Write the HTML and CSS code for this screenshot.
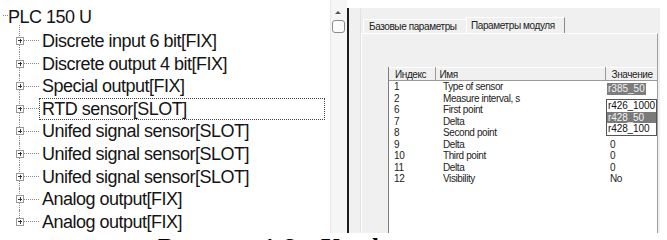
FILE: index.html
```html
<!DOCTYPE html>
<html lang="ru">
<head>
    <meta charset="UTF-8">
    <title>PLC 150 U - Параметры модуля</title>
    <link rel="stylesheet" href="styles.css">
</head>
<body>
    <div class="screen">
        <div class="tree-pane">
            <div class="tree-root"><span class="root-stub"></span><span>PLC 150 U</span></div>
            <ul class="tree">
                <li><span class="plus"></span><span class="branch"></span><span class="label">Discrete input 6 bit[FIX]</span></li>
                <li><span class="plus"></span><span class="branch"></span><span class="label">Discrete output 4 bit[FIX]</span></li>
                <li><span class="plus"></span><span class="branch"></span><span class="label">Special output[FIX]</span></li>
                <li><span class="plus"></span><span class="branch"></span><span class="label focus">RTD sensor[SLOT]</span></li>
                <li><span class="plus"></span><span class="branch"></span><span class="label">Unifed signal sensor[SLOT]</span></li>
                <li><span class="plus"></span><span class="branch"></span><span class="label">Unifed signal sensor[SLOT]</span></li>
                <li><span class="plus"></span><span class="branch"></span><span class="label">Unifed signal sensor[SLOT]</span></li>
                <li><span class="plus"></span><span class="branch"></span><span class="label">Analog output[FIX]</span></li>
                <li><span class="plus"></span><span class="branch"></span><span class="label">Analog output[FIX]</span></li>
            </ul>
        </div>
        <div class="scroll-strip">
            <span class="arrow-up"></span>
            <span class="check-box"></span>
        </div>
        <div class="props-pane">
            <div class="splitter"></div>
            <div class="tabs">
                <div class="tab-row">
                    <div class="tab">Базовые параметры</div>
                    <div class="tab active">Параметры модуля</div>
                </div>
                <div class="tab-panel">
                    <div class="grid">
                        <table>
                            <colgroup>
                                <col class="col-index">
                                <col class="col-name">
                                <col class="col-value">
                            </colgroup>
                            <thead>
                                <tr><th>Индекс</th><th>Имя</th><th>Значение</th></tr>
                            </thead>
                            <tbody>
                                <tr><td>1</td><td>Type of sensor</td><td></td></tr>
                                <tr><td>2</td><td>Measure interval, s</td><td></td></tr>
                                <tr><td>6</td><td>First point</td><td></td></tr>
                                <tr><td>7</td><td>Delta</td><td></td></tr>
                                <tr><td>8</td><td>Second point</td><td></td></tr>
                                <tr><td>9</td><td>Delta</td><td>0</td></tr>
                                <tr><td>10</td><td>Third point</td><td>0</td></tr>
                                <tr><td>11</td><td>Delta</td><td>0</td></tr>
                                <tr><td>12</td><td>Visibility</td><td>No</td></tr>
                            </tbody>
                        </table>
                        <div class="combo"><span class="combo-sel">r385_50</span></div>
                        <ul class="dropdown">
                            <li>r426_1000</li>
                            <li class="selected">r428_50</li>
                            <li>r428_100</li>
                        </ul>
                    </div>
                </div>
            </div>
        </div>
    </div>
    <div class="caption">Рисунок 1.6 – Конфигурация модуля</div>
</body>
</html>
```
FILE: styles.css
```css
* { padding: 0; margin: 0; box-sizing: border-box; }
body {
    width: 667px;
    height: 240px;
    overflow: hidden;
    background: #fff;
    font-family: "Liberation Sans", Arial, sans-serif;
}
.screen {
    display: flex;
    height: 233px;
}

/* device tree */
.tree-pane {
    flex: 0 0 330px;
    overflow: hidden;
    background: #fff;
    color: #141414;
    font-size: 18px;
    letter-spacing: -0.5px;
}
.tree-root {
    display: flex;
    align-items: flex-start;
    height: 29.7px;
    padding: 6px 0 0 3px;
    line-height: 22px;
}
.root-stub {
    width: 5px;
    margin-top: 9px;
    border-top: 1px dotted #8a8a8a;
}
.tree {
    list-style: none;
    margin-left: 19px;
}
.tree li {
    position: relative;
    display: flex;
    align-items: center;
    height: 22.6px;
}
.tree li::before {
    content: "";
    position: absolute;
    left: 0;
    top: 0;
    bottom: 0;
    border-left: 1px dotted #8a8a8a;
}
.tree li:first-child::before { top: -5px; }
.tree li:last-child::before { bottom: 50%; }
.plus {
    position: relative;
    width: 8px;
    height: 8px;
    margin-left: -3px;
    border: 1px solid #9a9a9a;
    background: #fff;
}
.plus::before, .plus::after {
    content: "";
    position: absolute;
    background: #333;
}
.plus::before { left: 1px; right: 1px; top: 2.5px; height: 1px; }
.plus::after { top: 1px; bottom: 1px; left: 2.5px; width: 1px; }
.branch {
    width: 15px;
    border-top: 1px dotted #8a8a8a;
}
.label {
    border: 1px dotted transparent;
    padding: 0 2px;
    line-height: 20px;
    white-space: nowrap;
}
.label.focus {
    width: 286px;
    border-color: #444;
}

/* thin scroll strip */
.scroll-strip {
    flex: 0 0 17px;
    display: flex;
    flex-direction: column;
    align-items: center;
    padding: 11px 2px 0 0;
    background: #f6f6f6;
    border-left: 1px solid #e8e8e8;
}
.arrow-up {
    width: 0;
    height: 0;
    border-left: 3px solid transparent;
    border-right: 3px solid transparent;
    border-bottom: 3px solid #555;
}
.check-box {
    width: 13px;
    height: 13px;
    margin-top: 6px;
    border: 1px solid #8c8c8c;
    border-radius: 3px;
    background: #fbfbfb;
}

/* properties */
.props-pane {
    flex: 0 0 313px;
    display: flex;
    margin-top: 8px;
    background: #f0f0f0;
    border-left: 2px solid #1e1e1e;
    color: #222;
    font-size: 10px;
    letter-spacing: -0.4px;
}
.splitter {
    flex: 0 0 12px;
    border-right: 1px solid #e2e2e2;
}
.tabs {
    flex: 1;
    display: flex;
    flex-direction: column;
    padding: 9px 2px 0 0;
    min-width: 0;
}
.tab-row {
    display: flex;
    align-items: flex-end;
    height: 16px;
    padding-left: 2px;
}
.tab {
    width: 103px;
    height: 14px;
    padding-left: 5px;
    line-height: 13px;
    border-top: 1px solid #fff;
    border-left: 1px solid #fff;
    white-space: nowrap;
}
.tab.active {
    width: 99px;
    height: 16px;
    padding-left: 4px;
    line-height: 15px;
    border-right: 1px solid #8a8a8a;
}
.tab-panel {
    flex: 1;
    padding: 33px 0 0 26px;
    border-top: 1px solid #fff;
    border-left: 1px solid #fff;
    border-right: 1px solid #a0a0a0;
    overflow: hidden;
}
.grid {
    position: relative;
    height: 170px;
    background: #fff;
    border-left: 1px solid #7d7d7d;
}
.grid table {
    width: 268px;
    border-collapse: collapse;
    table-layout: fixed;
}
.col-index { width: 46px; }
.col-name { width: 170px; }
.col-value { width: 52px; }
.grid th {
    height: 13px;
    padding-left: 6px;
    background: #f0f0f0;
    border-top: 1px solid #fff;
    border-right: 1px solid #9a9a9a;
    border-bottom: 1px solid #9a9a9a;
    font-weight: normal;
    text-align: left;
    white-space: nowrap;
    overflow: hidden;
}
.grid th:nth-child(2) { padding-left: 4px; }
.grid th:last-child { border-right: none; }
.grid td {
    height: 11.5px;
    line-height: 11.5px;
    padding-left: 5px;
    white-space: nowrap;
}
.grid td:nth-child(2) { padding-left: 8px; }

/* open combo box over the value column */
.combo {
    position: absolute;
    left: 216px;
    top: 14px;
    width: 52px;
    height: 18px;
    padding: 2px 0 0 2px;
    background: #fff;
}
.combo-sel {
    display: inline-block;
    padding: 0 1px;
    line-height: 12px;
    font-size: 10px;
    letter-spacing: 0;
    background: #7d7d7d;
    color: #f2f2f2;
}
.dropdown {
    position: absolute;
    left: 217px;
    top: 32px;
    width: 51px;
    list-style: none;
    background: #fff;
    border: 1px solid #555;
    font-size: 10px;
    letter-spacing: -0.1px;
    color: #111;
}
.dropdown li {
    height: 11.5px;
    line-height: 11.5px;
    padding-left: 1px;
    white-space: nowrap;
}
.dropdown li.selected {
    background: #7a7a7a;
    color: #f4f4f4;
}

.caption {
    margin-top: 0;
    padding-left: 158px;
    font-family: "Liberation Serif", "Times New Roman", serif;
    font-weight: bold;
    font-size: 26px;
    line-height: 30px;
    white-space: nowrap;
}
```
